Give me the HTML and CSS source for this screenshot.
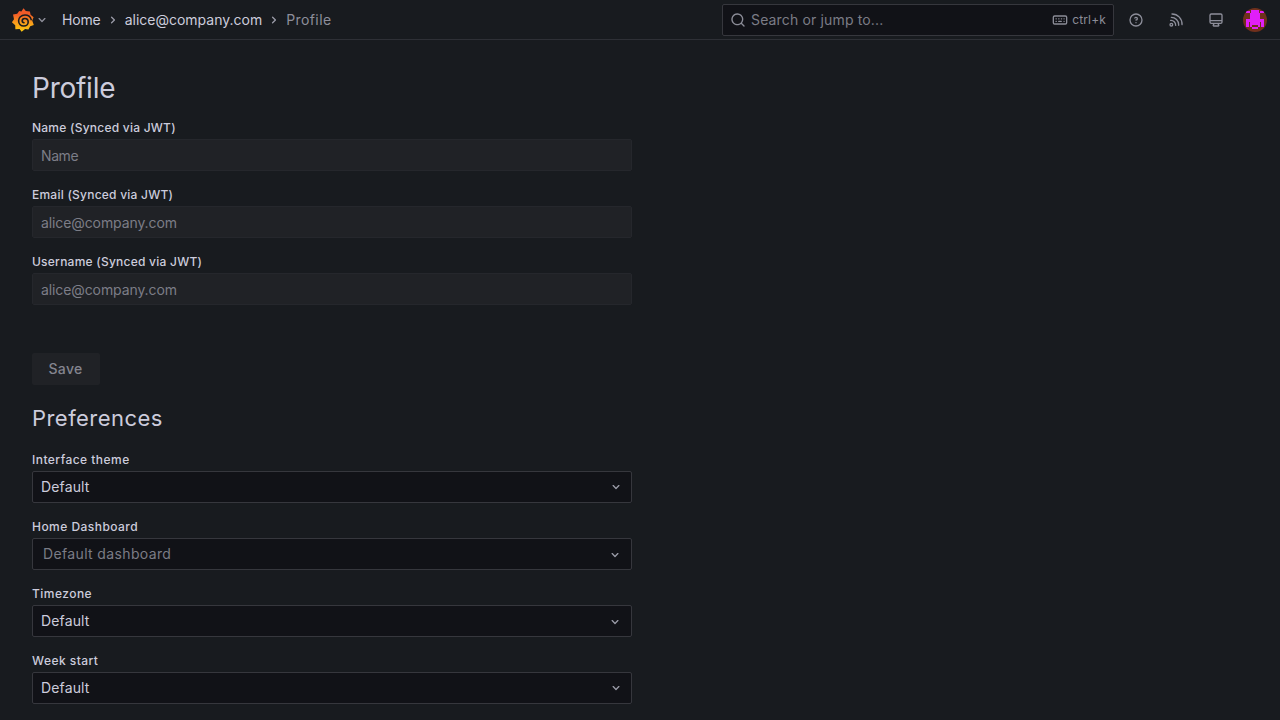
FILE: index.html
```html
<!DOCTYPE html>
<html lang="en">
<head>
    <meta charset="UTF-8">
    <title>Profile - Grafana</title>
    <link rel="stylesheet" href="styles.css">
</head>
<body>
    <svg class="sprite" xmlns="http://www.w3.org/2000/svg">
        <symbol id="angle-down" viewBox="0 0 24 24"><path d="M17,9.17a1,1,0,0,0-1.41,0L12,12.71,8.46,9.17a1,1,0,0,0-1.41,0,1,1,0,0,0,0,1.42l4.24,4.24a1,1,0,0,0,1.42,0L17,10.59A1,1,0,0,0,17,9.17Z"/></symbol>
        <symbol id="angle-right" viewBox="0 0 24 24"><path d="M14.83,11.29,10.59,7.05a1,1,0,0,0-1.42,0,1,1,0,0,0,0,1.41L12.71,12,9.17,15.54a1,1,0,0,0,0,1.41,1,1,0,0,0,.71.29,1,1,0,0,0,.71-.29l4.24-4.24A1,1,0,0,0,14.83,11.29Z"/></symbol>
    </svg>

    <header class="topbar">
        <a class="logo" href="#">
            <svg width="24" height="24" viewBox="0 0 24 24">
                <defs>
                    <linearGradient id="flame" x1="0" y1="1" x2="0" y2="0">
                        <stop offset="0" stop-color="#fcc80d"/>
                        <stop offset="0.4" stop-color="#f99a1c"/>
                        <stop offset="0.75" stop-color="#f05a28"/>
                    </linearGradient>
                </defs>
                <path fill="url(#flame)" d="M12.500 .2 14.800 3 18.900 3.500 19.600 6.800 22.600 9.200 21.200 12.600 22.800 17 19.200 18.300 17.400 21.600 14.100 21 10.600 23.800 8.600 20.900 4.400 21.300 4.200 17.200.9 14.300 3 11.200 2 6.500 6.200 5.700 8.200 3.100 10.400 3.400Z"/>
                <path class="swirl" d="M20.200 11.600C19.400 8.500 16.900 7 14 7c-3.900 0-6.400 2.700-6.400 5.800 0 3.100 2.400 5.200 5.200 5.200 2.600 0 4.400-1.800 4.400-4 0-2-1.500-3.500-3.400-3.500-1.600 0-2.600 1-2.600 2.300 0 1.200.8 1.900 1.800 1.900"/>
            </svg>
        </a>
        <svg class="icon logo-caret" width="16" height="16"><use href="#angle-down"/></svg>
        <nav class="breadcrumbs">
            <a class="home" href="#">Home</a>
            <svg class="icon" width="16" height="16"><use href="#angle-right"/></svg>
            <a class="account" href="#">alice@company.com</a>
            <svg class="icon" width="16" height="16"><use href="#angle-right"/></svg>
            <span class="current">Profile</span>
        </nav>

        <div class="search">
            <svg class="icon" width="16" height="16" viewBox="0 0 24 24"><path d="M21.71,20.29,18,16.61A9,9,0,1,0,16.61,18l3.68,3.68a1,1,0,0,0,1.42,0A1,1,0,0,0,21.71,20.29ZM11,18a7,7,0,1,1,7-7A7,7,0,0,1,11,18Z"/></svg>
            <span class="search-text">Search or jump to...</span>
            <svg class="icon line" width="16" height="16" viewBox="0 0 24 24">
                <rect x="2" y="6" width="20" height="12" rx="2"/>
                <path d="M6 10.300h.5M10 10.300h.5M14 10.300h.5M18 10.300h.2M6 14h.5M10 14h4M18 14h.2"/>
            </svg>
            <span class="shortcut">ctrl+k</span>
        </div>

        <div class="actions">
            <svg class="icon" width="16" height="16" viewBox="0 0 24 24"><path d="M11.29,15.29a1.58,1.58,0,0,0-.12.15.76.76,0,0,0-.09.18.64.64,0,0,0-.06.18,1.36,1.36,0,0,0,0,.2.84.84,0,0,0,.08.38.9.9,0,0,0,.54.54.94.94,0,0,0,.76,0,.9.9,0,0,0,.54-.54A1,1,0,0,0,13,16a1,1,0,0,0-.29-.71A1,1,0,0,0,11.29,15.29ZM12,2A10,10,0,1,0,22,12,10,10,0,0,0,12,2Zm0,18a8,8,0,1,1,8-8A8,8,0,0,1,12,20ZM12,7A3,3,0,0,0,9.4,8.5a1,1,0,1,0,1.73,1A1,1,0,0,1,12,9a1,1,0,0,1,0,2,1,1,0,1,0,0,2,3,3,0,0,0,0-6Z"/></svg>
            <svg class="icon line" width="16" height="16" viewBox="0 0 24 24">
                <circle cx="5" cy="19" r="2"/>
                <path d="M6 3a15 15 0 0 1 15 16M5 8a11 11 0 0 1 11 11v1M4 12.500a7 7 0 0 1 7.500 7.500"/>
            </svg>
            <svg class="icon" width="16" height="16" viewBox="0 0 24 24"><path d="M19,2H5A3,3,0,0,0,2,5V15a3,3,0,0,0,3,3H7.640l-.58,1a2,2,0,0,0,0,2,2,2,0,0,0,1.750,1h6.460A2,2,0,0,0,17,21a2,2,0,0,0,0-2l-.59-1H19a3,3,0,0,0,3-3V5A3,3,0,0,0,19,2ZM8.770,20,10,18H14l1.200,2ZM20,15a1,1,0,0,1-1,1H5a1,1,0,0,1-1-1V14H20Zm0-3H4V5A1,1,0,0,1,5,4H19a1,1,0,0,1,1,1Z"/></svg>
        </div>
        <svg class="avatar" width="24" height="24" viewBox="0 0 24 24">
            <rect width="24" height="24" fill="#70301c"/>
            <path fill="#e01ff8" d="M8 2h8v3h1v6h4v8h-3v-5h-1v5h-2v-2H9v2H7v-5H6v5H3v-8h4V5h1zM3 3h4v2H3zM17 3h4v2h-4zM9 19h6v2H9z"/>
        </svg>
    </header>

    <main class="page">
        <h1>Profile</h1>
        <form class="profile-form">
            <div class="field">
                <label for="name">Name (Synced via JWT)</label>
                <input class="input" id="name" placeholder="Name" disabled>
            </div>
            <div class="field">
                <label for="email">Email (Synced via JWT)</label>
                <input class="input" id="email" value="alice@company.com" disabled>
            </div>
            <div class="field">
                <label for="username">Username (Synced via JWT)</label>
                <input class="input" id="username" value="alice@company.com" disabled>
            </div>
            <button class="save" type="button" disabled>Save</button>
        </form>

        <h3>Preferences</h3>
        <div class="preferences">
            <div class="field">
                <label>Interface theme</label>
                <div class="select">
                    <span>Default</span>
                    <svg class="icon" width="16" height="16"><use href="#angle-down"/></svg>
                </div>
            </div>
            <div class="field">
                <label>Home Dashboard</label>
                <div class="select picker placeholder">
                    <span>Default dashboard</span>
                    <svg class="icon" width="16" height="16"><use href="#angle-down"/></svg>
                </div>
            </div>
            <div class="field">
                <label>Timezone</label>
                <div class="select picker">
                    <span>Default</span>
                    <svg class="icon" width="16" height="16"><use href="#angle-down"/></svg>
                </div>
            </div>
            <div class="field">
                <label>Week start</label>
                <div class="select">
                    <span>Default</span>
                    <svg class="icon" width="16" height="16"><use href="#angle-down"/></svg>
                </div>
            </div>
        </div>
    </main>
</body>
</html>
```

FILE: styles.css
```css
* {
    box-sizing: border-box;
}

body {
    margin: 0;
    height: 100vh;
    overflow: hidden;
    background: #181b1f;
    color: rgb(204, 204, 220);
    font-family: Inter, Helvetica, Arial, sans-serif;
    font-size: 14px;
    line-height: 22px;
    letter-spacing: 0.01071em;
}

a {
    color: inherit;
    text-decoration: none;
}

.sprite {
    display: none;
}

.icon {
    flex: none;
    display: block;
    fill: currentColor;
}

.icon.line {
    fill: none;
    stroke: currentColor;
    stroke-width: 2;
    stroke-linecap: round;
    stroke-linejoin: round;
}

/* top bar */
.topbar {
    display: flex;
    align-items: center;
    height: 40px;
    padding: 0 13px 0 11px;
    border-bottom: 1px solid #2e3036;
}

.logo svg {
    display: block;
}

.swirl {
    fill: none;
    stroke: #181b1f;
    stroke-width: 1.6;
    stroke-linecap: round;
}

.logo-caret {
    margin-left: -1px;
    color: #8e8f9a;
}

.breadcrumbs {
    display: flex;
    align-items: center;
    flex: 1;
    margin-left: 12px;
}

.breadcrumbs .icon {
    margin: 0 4px;
    color: #9a9ba7;
}

.breadcrumbs .home {
    letter-spacing: -0.15px;
}

.breadcrumbs .account {
    letter-spacing: 0;
}

.breadcrumbs .current {
    color: #8d8e9a;
    letter-spacing: 0.4px;
}

.search {
    display: flex;
    align-items: center;
    width: 392px;
    height: 32px;
    padding: 0 7px;
    background: #111217;
    border: 1px solid #36373d;
    border-radius: 2px;
    color: #8b8c97;
}

.search-text {
    flex: 1;
    padding-left: 5px;
    color: #7b7c86;
}

.shortcut {
    padding-left: 4px;
    font-size: 12px;
}

.actions {
    display: flex;
    gap: 24px;
    padding: 0 19px 0 14px;
    color: #8d8e9a;
}

.avatar {
    display: block;
    border-radius: 50%;
}

/* page */
.page {
    width: 664px;
    padding: 32px;
}

h1 {
    margin: 0 0 16px;
    font-size: 28px;
    line-height: 32px;
    font-weight: 400;
    letter-spacing: -0.00893em;
}

h3 {
    margin: 0 0 22px;
    font-size: 22px;
    line-height: 24px;
    font-weight: 400;
    letter-spacing: 0.45px;
}

.field {
    margin-bottom: 16px;
}

label {
    display: block;
    margin-bottom: 4px;
    font-size: 12px;
    line-height: 15px;
    font-weight: 500;
    letter-spacing: 0.24px;
}

.preferences label {
    letter-spacing: 0.46px;
}

.input {
    display: block;
    width: 100%;
    height: 32px;
    padding: 0 8px;
    background: #202226;
    border: 1px solid #25272c;
    border-radius: 2px;
    color: #7c7d87;
    font-family: inherit;
    font-size: 14px;
    letter-spacing: -0.1px;
}

.input::placeholder {
    color: #7c7d87;
    letter-spacing: -0.4px;
}

.save {
    display: block;
    width: 68px;
    height: 32px;
    margin: 48px 0 21px;
    padding: 0 1px 2px 0;
    background: #202226;
    border: 0;
    border-radius: 2px;
    color: #84858f;
    font: 500 14px Inter, sans-serif;
    letter-spacing: 0.3px;
}

.select {
    display: flex;
    align-items: center;
    justify-content: space-between;
    height: 32px;
    padding: 0 7px 0 8px;
    background: #111217;
    border: 1px solid #36373d;
    border-radius: 2px;
}

.select .icon {
    color: #9a9ba7;
}

.picker {
    padding-right: 8px;
}

.picker .icon {
    margin-top: 2px;
}

.placeholder {
    padding-left: 10px;
    color: #7b7c86;
    letter-spacing: 0.36px;
}
```
